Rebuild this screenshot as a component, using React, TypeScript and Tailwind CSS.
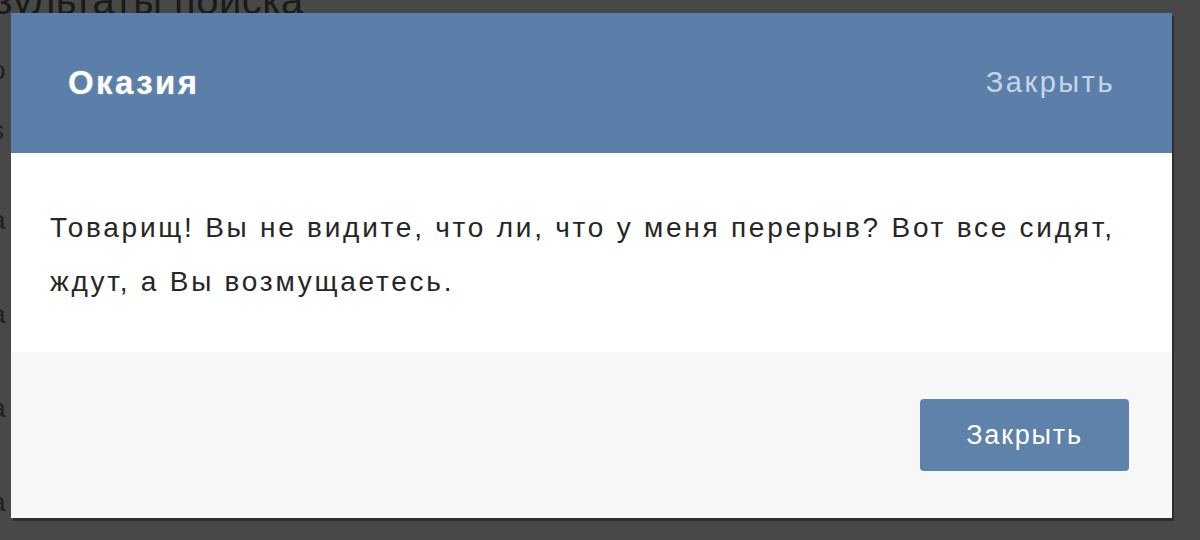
export default function App() {
    const sideBits = [
        { ch: "р", cls: "mt-[0px]" },
        { ch: "s", cls: "mt-[24px]" },
        { ch: "а", cls: "mt-[54px]" },
        { ch: "а", cls: "mt-[58px]" },
        { ch: "а", cls: "mt-[58px]" },
        { ch: "а", cls: "mt-[58px]" },
    ];

    return (
        <div className="relative w-[1200px] h-[540px] overflow-hidden bg-[#484848] font-['Liberation_Sans',Arial,sans-serif]">
            {/* страница под затемнением */}
            <div className="flex flex-col">
                <div className="-mt-[22px] -ml-[6px] text-[40px] leading-[44px] tracking-[0.5px] text-[#1a1a1a]">зультаты поиска</div>
                <div className="flex flex-col pt-[30px] -ml-[9px]">
                    {sideBits.map((b, i) => (
                        <span key={i} className={`text-[26px] leading-[36px] text-[#1f1f1f] ${b.cls}`}>{b.ch}</span>
                    ))}
                </div>
            </div>

            {/* МОДАЛЬНОЕ ОКНО */}
            <div className="absolute left-[11px] top-[13px] w-[1161px] flex flex-col shadow-[2px_3px_0_#2e2e2e]">
                <div className="h-[140px] bg-[#5b7fa8] flex items-center justify-between px-[57px]">
                    <h1 className="text-[33px] font-bold tracking-[2.4px] text-white [text-shadow:0_0_2px_rgba(255,255,255,0.4)]">Оказия</h1>
                    <span className="text-[29px] tracking-[2.5px] text-[#c6d6ea]">Закрыть</span>
                </div>
                <div className="h-[199px] bg-white pt-[48px] pl-[39px] pr-[20px]">
                    <p className="text-[28px] leading-[54px] tracking-[2.75px] text-[#262626] whitespace-nowrap">
                        Товарищ! Вы не видите, что ли, что у меня перерыв? Вот все сидят,
                        <br />
                        ждут, а Вы возмущаетесь.
                    </p>
                </div>
                <div className="h-[166px] bg-[#f7f7f7] flex items-center justify-end pr-[43px]">
                    <button className="w-[209px] h-[72px] rounded-[4px] bg-[#5e82aa] text-white text-[27px] tracking-[1.8px]">Закрыть</button>
                </div>
            </div>
        </div>
    );
}
